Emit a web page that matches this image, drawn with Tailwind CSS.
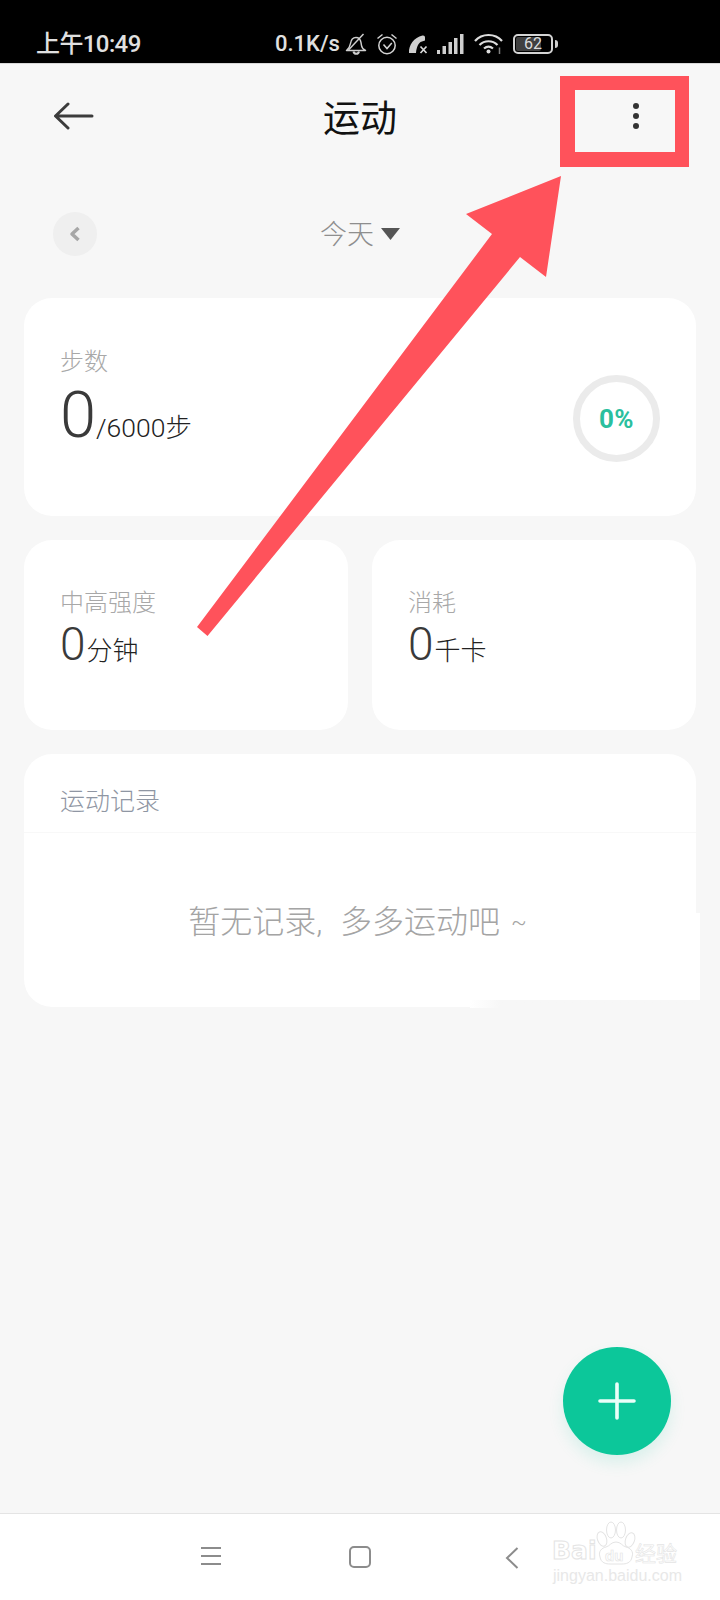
<!DOCTYPE html>
<html lang="zh-CN">
<head>
<meta charset="utf-8">
<title>运动</title>
<script src="https://cdn.jsdelivr.net/npm/@tailwindcss/browser@4"></script>
</head>
<body class="m-0">
<div class="relative flex flex-col w-[720px] h-[1600px] overflow-hidden bg-[#f7f7f7] font-['Roboto','Noto_Sans_CJK_SC',sans-serif]">

  <!-- status bar -->
  <div class="relative flex items-center h-[64px] shrink-0 bg-black text-[#e0e0e0] pt-[24px] border-b border-[#d8d8d8]">
    <span class="ml-[36px] w-[239px] text-[24px] leading-none font-medium tracking-[-0.6px]">上午10:49</span>
    <span class="w-[70px] text-[22px] leading-none font-medium">0.1K/s</span>
    <svg class="w-[22px] h-[22px] shrink-0" viewBox="0 0 22 22" fill="none" stroke="#cfcfcf" stroke-width="1.500" stroke-linejoin="round"><path d="M1.500 17.500c2.500-2 3.500-4 4-7 .5-3.500 2.500-6 5.500-6 2.500 0 4.500 2 5 5l.5 3c.3 2 2 4 4 5z"/><path d="M8.500 18.500c.5 3 5 3 5.500 0" stroke-width="2"/><path d="M3.500 17 18.500 1"/></svg>
    <svg class="ml-[9px] w-[22px] h-[22px] shrink-0" viewBox="0 0 22 22" fill="none" stroke="#d4d4d4" stroke-width="1.500"><circle cx="11" cy="12.500" r="8.200"/><path d="M7.500 11.500l3.500 4 4.800-5.500M1.500 5.500 6.500 1.500M20.500 5.500 15.500 1.500"/></svg>
    <svg class="ml-[10px] w-[21px] h-[20px] shrink-0" viewBox="0 0 21 20" fill="none"><path d="M1 19c-.5-8 5-15.500 13.500-17.500 1.500-.3 2.500.5 2.500 2v3l-4.500 1.500c-2 1.500-4 5-4.500 11z" fill="#cfcfcf"/><path d="M12.500 12.500l6 6.500M18.500 12.500l-6 6.500" stroke="#d8d8d8" stroke-width="1.700"/></svg>
    <svg class="ml-[8px] w-[27px] h-[20px] shrink-0" viewBox="0 0 27 20" fill="#cfcfcf"><rect x="0" y="16" width="3" height="4"/><rect x="5.500" y="12" width="3.500" height="8"/><rect x="11.500" y="8" width="3.500" height="12"/><rect x="17" y="4" width="3.500" height="16"/><rect x="23" y="0" width="3.500" height="20"/></svg>
    <svg class="ml-[10px] w-[29px] h-[21px] shrink-0" viewBox="0 0 29 21" fill="none" stroke="#dcdcdc" stroke-width="2.200"><path d="M1 8c7-8 20-8 27 0M5.500 12c5-5 13-5 18 0M10 15.500c3-2.500 6-2.500 9 0"/><circle cx="14.500" cy="18.500" r="2" fill="#dcdcdc" stroke="none"/><path d="M25.500 14.500v6.500" stroke="#808080" stroke-width="1.500"/></svg>
    <div class="relative ml-[10px] flex items-center justify-center w-[40px] h-[20px] shrink-0 border-2 border-[#d4d4d4] rounded-[5px] overflow-hidden">
      <div class="absolute left-[1px] top-[1px] bottom-[1px] w-[25px] bg-[#404040] rounded-[2px]"></div>
      <span class="relative text-[16px] leading-none text-[#dcdcdc]">62</span>
    </div>
    <div class="ml-[2px] w-[3px] h-[8px] bg-[#cfcfcf] rounded-r-sm shrink-0"></div>
  </div>

  <!-- header -->
  <div class="relative flex items-center justify-center h-[109px] pt-[1px] shrink-0">
    <svg class="absolute left-[53px] top-[38px] w-[41px] h-[28px]" viewBox="0 0 41 28" fill="none" stroke="#3c3c3c" stroke-width="3" stroke-linecap="round" stroke-linejoin="round"><path d="M39 14H3M15 2 2.500 14 15 26"/></svg>
    <h1 class="m-0 text-[37px] leading-none font-normal text-[#111]">运动</h1>
    <div class="absolute left-[633px] top-[39px] flex flex-col gap-[4px]">
      <span class="block w-[6px] h-[6px] rounded-full bg-[#333]"></span>
      <span class="block w-[6px] h-[6px] rounded-full bg-[#333]"></span>
      <span class="block w-[6px] h-[6px] rounded-full bg-[#333]"></span>
    </div>
  </div>

  <!-- date row -->
  <div class="relative flex items-center justify-center h-[122px] pt-[2px] mb-[3px] shrink-0">
    <div class="absolute left-[53px] top-[39px] flex items-center justify-center w-[44px] h-[44px] rounded-full bg-[#efefef]">
      <svg class="w-[12px] h-[16px]" viewBox="0 0 12 16" fill="none" stroke="#a6a6a6" stroke-width="3.500" stroke-linejoin="round"><path d="M9.500 2 3 8l6.500 6"/></svg>
    </div>
    <span class="text-[27px] leading-none font-light text-[#8e8e8e]">今天</span>
    <svg class="ml-[7px] -mt-[2px] w-[19px] h-[12px]" viewBox="0 0 19 12" fill="#555"><path d="M0 0h19L9.500 12z"/></svg>
  </div>

  <!-- cards -->
  <main class="flex flex-col gap-[24px] px-[24px] flex-1 min-h-0">
    <section class="flex items-start justify-between h-[218px] rounded-[28px] bg-white pl-[36px] pr-[36px] pt-[50px]">
      <div>
        <div class="text-[24px] leading-[28px] font-light text-[#a8a8a8]">步数</div>
        <div class="flex items-baseline mt-[8px] text-[#3a3a3a]">
          <span class="text-[65px] leading-[62px] font-light">0</span>
          <span class="text-[26.500px] leading-none font-light text-[#222]">/6000步</span>
        </div>
      </div>
      <div class="flex items-center justify-center w-[87px] h-[87px] mt-[27px] rounded-full border-[7px] border-[#ebebeb]">
        <span class="text-[26px] leading-none font-bold text-[#2bbf9e] tracking-[0.5px]">0%</span>
      </div>
    </section>

    <div class="grid grid-cols-2 gap-[24px]">
      <section class="h-[190px] rounded-[28px] bg-white pl-[36px] pt-[49px]">
        <div class="text-[24px] leading-[28px] font-light text-[#a8a8a8]">中高强度</div>
        <div class="flex items-baseline mt-[1px] text-[#3a3a3a]">
          <span class="text-[46px] leading-[52px] font-light">0</span>
          <span class="text-[26px] leading-none font-light ml-[1px] text-[#222]">分钟</span>
        </div>
      </section>
      <section class="h-[190px] rounded-[28px] bg-white pl-[36px] pt-[49px]">
        <div class="text-[24px] leading-[28px] font-light text-[#a8a8a8]">消耗</div>
        <div class="flex items-baseline mt-[1px] text-[#3a3a3a]">
          <span class="text-[46px] leading-[52px] font-light">0</span>
          <span class="text-[26px] leading-none font-light ml-[1px] text-[#222]">千卡</span>
        </div>
      </section>
    </div>

    <section class="h-[253px] rounded-[28px] bg-white">
      <div class="flex items-center h-[79px] pt-[16px] pl-[36px] border-b border-[#f8f8f8] text-[25px] leading-none font-light text-[#8f96a3]">运动记录</div>
      <div class="flex items-center justify-center h-[174px] pt-[4px] pr-[5px] text-[32px] leading-none font-light text-[#a4a4a4] [word-spacing:10px]"><span>暂无记录, 多多运动吧</span><span class="ml-[11px] text-[23px]">~</span></div>
    </section>
  </main>

  <!-- bottom nav -->
  <nav class="relative flex items-center h-[87px] shrink-0 bg-white border-t border-[#e4e4e4]">
    <div class="absolute left-[201px] top-[33px] flex flex-col gap-[6px] w-[20px]">
      <span class="block h-[2px] bg-[#8c8c8c]"></span>
      <span class="block h-[2px] bg-[#8c8c8c]"></span>
      <span class="block h-[2px] bg-[#8c8c8c]"></span>
    </div>
    <div class="absolute left-[349px] top-[32px] w-[22px] h-[22px] border-2 border-[#8c8c8c] rounded-[5px]"></div>
    <svg class="absolute left-[505px] top-[33px] w-[14px] h-[22px]" viewBox="0 0 14 22" fill="none" stroke="#8c8c8c" stroke-width="2"><path d="M12.500 1 2 11l10.500 10"/></svg>

    <!-- watermark -->
    <div class="absolute left-[540px] top-[1px] w-[160px] h-[75px] text-white">
      <svg class="absolute left-0 top-0 w-[160px] h-[75px]" viewBox="0 0 160 75" fill="none" stroke="#e4e4e4" stroke-width="1"><ellipse cx="62" cy="24" rx="4.500" ry="7.500" transform="rotate(-20 62 24)"/><ellipse cx="71" cy="15" rx="4.500" ry="8"/><ellipse cx="81" cy="15" rx="4.500" ry="8"/><ellipse cx="90" cy="25" rx="4.500" ry="7.500" transform="rotate(20 90 25)"/><path d="M60 42c-2-6 2-9 6-10 4-1 5-5 10-5s6 4 10 5c4 1 8 4 6 10-1 6-6 7-10 7H70c-4 0-9-1-10-7z"/></svg>
      <span class="absolute left-[12px] top-[22px] text-[25px] leading-[28px] font-['DejaVu_Sans',sans-serif] font-bold [-webkit-text-stroke:1px_#e4e4e4]">Bai</span>
      <span class="absolute left-[65px] top-[32px] text-[15px] leading-[18px] font-['Liberation_Sans',sans-serif] font-bold [-webkit-text-stroke:0.6px_#e4e4e4]">du</span>
      <span class="absolute left-[95px] top-[24px] text-[21px] leading-[26px] font-['Noto_Sans_CJK_SC',sans-serif] [-webkit-text-stroke:0.6px_#e4e4e4]">经验</span>
      <span class="absolute left-[13px] top-[52px] text-[16px] leading-[18px] font-['Liberation_Sans',sans-serif] text-[#e8e8e8] whitespace-nowrap">jingyan.baidu.com</span>
    </div>
  </nav>

  <!-- retouch marks in the picture -->
  <div class="absolute left-[650px] top-[913px] w-[50px] h-[87px] bg-white"></div>
  <div class="absolute left-[470px] top-[1000px] w-[230px] h-[8px] bg-linear-to-r from-white to-[#f7f7f7] to-[13%]"></div>

  <!-- floating action button -->
  <button class="absolute left-[563px] top-[1347px] flex items-center justify-center w-[108px] h-[108px] rounded-full bg-[#0cc79a] shadow-[0_8px_16px_rgba(12,199,154,0.12)]">
    <svg class="w-[38px] h-[38px]" viewBox="0 0 38 38" fill="none" stroke="#eafff9" stroke-width="3.600" stroke-linecap="round"><path d="M19 2v34M2 19h34"/></svg>
  </button>

  <!-- annotation: red frame and arrow -->
  <div class="absolute left-[560px] top-[76px] w-[129px] h-[91px] border-[#ff525b] border-t-[14px] border-b-[15px] border-l-[15px] border-r-[14px]"></div>
  <svg class="absolute left-0 top-0 w-[720px] h-[700px] pointer-events-none" viewBox="0 0 720 700"><polygon fill="#ff525b" points="561,176 466,214 492,234 197,627 207.500,636 520,257 546,277"/></svg>
</div>
</body>
</html>
